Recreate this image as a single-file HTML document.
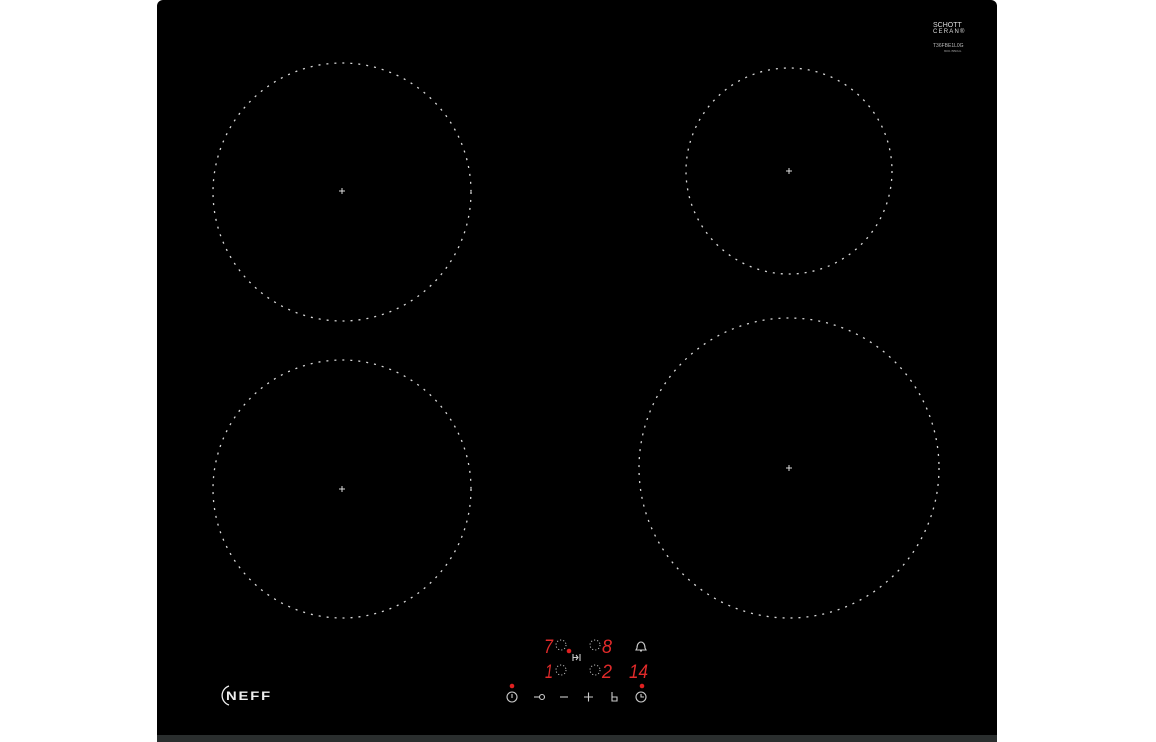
<!DOCTYPE html>
<html><head><meta charset="utf-8"><style>
html,body{margin:0;padding:0;background:#fff;width:1156px;height:742px;overflow:hidden}
.hob{position:absolute;left:157px;top:0;width:840px;height:742px;background:#000;border-radius:6px 6px 0 0}
.strip{position:absolute;left:157px;top:735px;width:840px;height:7px;background:#2a2e2e}
svg{position:absolute;left:0;top:0}
</style></head><body>
<div class="hob"></div>
<div class="strip"></div>
<svg width="1156" height="742" viewBox="0 0 1156 742">
<g fill="none" stroke="#d8d8d8" stroke-width="1.3" stroke-dasharray="2 6">
<circle cx="342" cy="192" r="129"/>
<circle cx="342" cy="489" r="129"/>
<circle cx="789" cy="171" r="103"/>
<circle cx="789" cy="468" r="150"/>
</g>
<g stroke="#ddd" stroke-width="1">
<path d="M339 191h6M342 188v6"/><path d="M339 489h6M342 486v6"/>
<path d="M786 171h6M789 168v6"/><path d="M786 468h6M789 465v6"/>
</g>
<text x="933" y="27" fill="#ddd" font-family="Liberation Sans,sans-serif" font-size="7">SCHOTT</text>
<text x="933" y="33" fill="#ddd" font-family="Liberation Sans,sans-serif" font-size="6" letter-spacing="1.2">CERAN®</text>
<text x="933" y="47" fill="#bbb" font-family="Liberation Sans,sans-serif" font-size="5">T36FBE1L0G</text>
<text x="944" y="52" fill="#999" font-family="Liberation Sans,sans-serif" font-size="3">8001 BBRHL</text>
<!-- NEFF -->
<path d="M229 686 A10 10 0 0 0 229 705" fill="none" stroke="#eee" stroke-width="1.3"/>
<text x="226" y="700" fill="#eee" font-family="Liberation Sans,sans-serif" font-weight="bold" font-size="12" letter-spacing="1.5" textLength="46" lengthAdjust="spacingAndGlyphs">NEFF</text>
<!-- red digits -->
<g fill="#e02a2a" font-family="Liberation Sans,sans-serif" font-size="19" font-style="italic">
<text x="544" y="653" textLength="9" lengthAdjust="spacingAndGlyphs">7</text>
<text x="602" y="653" textLength="10" lengthAdjust="spacingAndGlyphs">8</text>
<text x="545" y="678" textLength="8" lengthAdjust="spacingAndGlyphs">1</text>
<text x="602" y="678" textLength="10" lengthAdjust="spacingAndGlyphs">2</text>
<text x="629" y="678" textLength="19" lengthAdjust="spacingAndGlyphs">14</text>
</g>
<g fill="none" stroke="#bbb" stroke-width="1" stroke-dasharray="1.2 2">
<circle cx="561" cy="645" r="5"/><circle cx="595" cy="645" r="5"/>
<circle cx="561" cy="670" r="5"/><circle cx="595" cy="670" r="5"/>
</g>
<g fill="#e02020"><circle cx="569" cy="651" r="2.3"/><circle cx="512" cy="686" r="2.3"/><circle cx="642" cy="686" r="2.3"/></g>
<g fill="none" stroke="#ccc" stroke-width="1.1">
<path d="M573 654v7M580 654v7M573 657.5h5M576 655l2 2.5-2 2.5"/>
<path d="M637 648c0-4 2-6 4-6s4 2 4 6l1 2h-10z M640 651h2"/>
<circle cx="512" cy="697" r="5"/><path d="M512 694v4"/>
<path d="M534 697h5"/><circle cx="542" cy="697" r="2.5"/>
<path d="M560 697h8"/>
<path d="M584 697h9M588.5 692.5v9"/>
<path d="M612 692v9h5v-4h-5"/>
<circle cx="641" cy="697" r="5"/><path d="M641 694v3h3"/>
</g>
</svg>
</body></html>
